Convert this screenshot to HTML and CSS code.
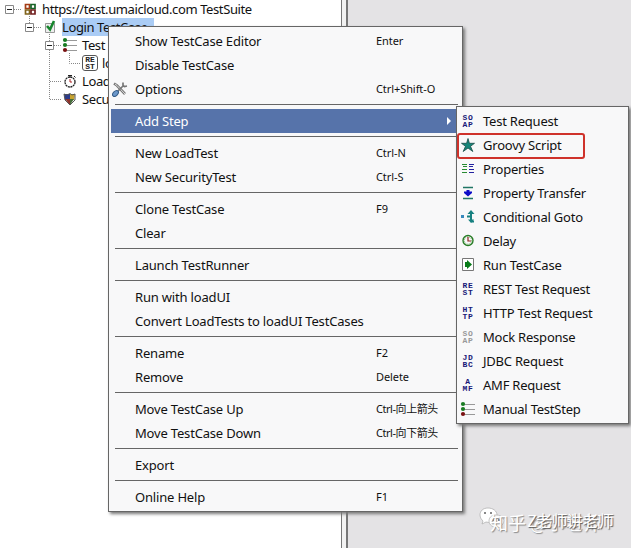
FILE: index.html
```html
<!DOCTYPE html>
<html lang="en">
<head>
<meta charset="utf-8">
<title>TestSuite</title>
<link rel="stylesheet" href="styles.css">
</head>
<body>
<svg class="defs" aria-hidden="true">
  <symbol id="list" viewBox="0 0 16 16"><path d="M5 3.500h10M5 8.500h10M5 13.500h10" stroke="#999" stroke-width="1"/><circle cx="3" cy="3" r="2.1" fill="#187b22"/><circle cx="3" cy="8" r="2.1" fill="#187b22"/><circle cx="3" cy="13" r="2.1" fill="#781010"/></symbol>
</svg>
<div class="app">
  <div class="tree">
    <svg class="lines" width="140" height="110" fill="none" stroke="#888"><path stroke-dasharray="1 1" d="M14 9.500h8M29.500 14v9M34 27.500h8M49.500 34v66M54 45.500h8M69.500 53v10.500h11M50 81.500h11M50 99.500h11"/><g fill="#fff"><path d="M5.500 5.500h8v8h-8zM25.500 23.500h8v8h-8zM45.500 41.500h8v8h-8z"/></g><path stroke="#222" d="M7 9.500h5M27 27.500h5M47 45.500h5"/></svg>
    <div class="node l1"><svg width="16" height="16"><g stroke-width="1.700" fill="#fff"><path stroke="#a33c16" d="M3.500 3.500h4v4h-4z"/><path stroke="#176327" d="M9 3.500h4v4H9z"/><path stroke="#80631a" d="M3.500 9h4v4h-4z"/><path stroke="#722020" d="M9 9h4v4H9z"/></g></svg><span>https://test.umaicloud.com TestSuite</span></div>
    <div class="node l2"><svg width="16" height="16"><path fill="#eee" stroke="#999" d="M3.500 4.500h9v9h-9z"/><path fill="none" stroke="#16852c" stroke-width="2.600" d="M5 7l3 3.500L12 2"/></svg><span class="sel">Login TestCase</span></div>
    <div class="node l3"><svg width="16" height="16"><use href="#list"/></svg><span>Test Steps</span></div>
    <div class="node l4"><span class="glyph boxed">RE<br>ST</span><span>login</span></div>
    <div class="node l3"><svg width="16" height="16" fill="none" stroke="#222"><circle cx="8" cy="9" r="5" fill="#fff" stroke-width="1.300" stroke-dasharray="2 .6"/><path d="M6 2.500h4M8 2v3M12 3l1.500 1.500"/><path stroke="#a22" d="M8 6v3h2"/></svg><span>Load Tests</span></div>
    <div class="node l3"><svg width="16" height="16"><path fill="#2b3b8b" d="M2 3h6v6H3z"/><path fill="#c7a22e" d="M8 3h5l-1 6H8z"/><path fill="#8c332b" d="M3 8h5v6z"/><path fill="#456c38" d="M8 8h4l-4 6z"/><path fill="none" stroke="#555" d="M2 3l3 1 3-1.500L10 4l3-1v6l-5 5-5-5z"/></svg><span>Security Tests</span></div>
  </div>
  <div class="divider"></div>
  <div class="desk"></div>
</div>

<div class="menu main">
  <div class="item"><b>Show TestCase Editor</b><kbd>Enter</kbd></div>
  <div class="item"><b>Disable TestCase</b></div>
  <div class="item"><svg class="tool" width="16" height="16" fill="none"><path stroke="#777" stroke-width="2.600" d="M2 2.500l3 2 8 8.500"/><path stroke="#ddd" d="M3 3l2 1.500 8 8.500"/><path stroke="#777" stroke-width="1.700" d="M5.500 10.500L12 4M11 1.500v3l1.500 1 2.500-.500"/><ellipse cx="3.500" cy="12.500" rx="3.500" ry="2.200" transform="rotate(-45 3.500 12.500)" fill="#6c98ca" stroke="#345c87"/></svg><b>Options</b><kbd>Ctrl+Shift-O</kbd></div>
  <hr>
  <div class="item active"><b>Add Step</b><i></i></div>
  <hr>
  <div class="item"><b>New LoadTest</b><kbd>Ctrl-N</kbd></div>
  <div class="item"><b>New SecurityTest</b><kbd>Ctrl-S</kbd></div>
  <hr>
  <div class="item"><b>Clone TestCase</b><kbd>F9</kbd></div>
  <div class="item"><b>Clear</b></div>
  <hr>
  <div class="item"><b>Launch TestRunner</b></div>
  <hr>
  <div class="item"><b>Run with loadUI</b></div>
  <div class="item"><b>Convert LoadTests to loadUI TestCases</b></div>
  <hr>
  <div class="item"><b>Rename</b><kbd>F2</kbd></div>
  <div class="item"><b>Remove</b><kbd>Delete</kbd></div>
  <hr>
  <div class="item"><b>Move TestCase Up</b><kbd class="cjk">Ctrl-向上箭头</kbd></div>
  <div class="item"><b>Move TestCase Down</b><kbd class="cjk">Ctrl-向下箭头</kbd></div>
  <hr>
  <div class="item"><b>Export</b></div>
  <hr>
  <div class="item"><b>Online Help</b><kbd>F1</kbd></div>
</div>

<div class="menu sub">
  <div class="item"><span class="glyph">SO<br>AP</span><b>Test Request</b></div>
  <div class="item marked"><svg width="16" height="16"><path fill="#168579" stroke="#164a45" stroke-width=".8" d="M8 1.500l1.400 4.800H14.500l-4 3 2.300 5.200L8 11l-4.800 3.500 2.300-5.200-4-3h5.100z"/></svg><b>Groovy Script</b></div>
  <div class="item"><svg width="16" height="16"><path stroke="#278b32" d="M2 3.500h5M3 5.500h4M2 8.500h5M2 11.500h5"/><path stroke="#2222a0" d="M9 3.500h5M9 5.500h4M9 8.500h5M9 11.500h5"/></svg><b>Properties</b></div>
  <div class="item"><svg width="16" height="16"><path stroke="#207666" stroke-width="1.300" d="M3 2.500h10M3 13.500h10"/><path fill="#0c0cc8" d="M6.500 5h3v1.500H12v1.500l-4 3.500L4 8V6.500h2.500z"/></svg><b>Property Transfer</b></div>
  <div class="item"><svg width="16" height="16"><path fill="#3889bd" d="M1 6h3v3H1z"/><path fill="none" stroke="#168080" stroke-width="2" d="M11 4v8M7 7.500h4M11 12.500h3"/><path fill="#168080" d="M7.500 5L11 1l3.500 4zM8 10.500h6L11 14z"/></svg><b>Conditional Goto</b></div>
  <div class="item"><svg width="16" height="16" fill="none"><circle cx="8" cy="7.500" r="5" stroke="#287c26" stroke-width="1.400"/><circle cx="8" cy="7.500" r="3.700" stroke="#69a95e" stroke-dasharray="1 1"/><path stroke="#8b2020" stroke-width="1.200" d="M8 4v4h3"/></svg><b>Delay</b></div>
  <div class="item"><svg width="16" height="16"><path fill="#fff" stroke="#777" d="M2.500 1.500h11v12h-11z"/><path fill="#087b18" d="M5 5h2V3l5 4.500L7 12v-2H5z"/></svg><b>Run TestCase</b></div>
  <div class="item"><span class="glyph">RE<br>ST</span><b>REST Test Request</b></div>
  <div class="item"><span class="glyph">HT<br>TP</span><b>HTTP Test Request</b></div>
  <div class="item"><span class="glyph gray">SO<br>AP</span><b>Mock Response</b></div>
  <div class="item"><span class="glyph">JD<br>BC</span><b>JDBC Request</b></div>
  <div class="item"><span class="glyph">A<br>MF</span><b>AMF Request</b></div>
  <div class="item"><svg width="16" height="16"><use href="#list"/></svg><b>Manual TestStep</b></div>
</div>

<div class="watermark">
  <svg width="28" height="24"><path fill="#fff" stroke="#aaa" stroke-width=".7" d="M9 1C4 1 1 4 1 8c0 3 2 5 3 6l-1 3 4-2c8 2 11-3 11-7 0-4-4-7-9-7z"/><path fill="#fff" stroke="#aaa" stroke-width=".7" d="M17 8c-5 0-7 3-7 6 0 4 4 7 9 6l4 2-1-3c6-5 2-11-5-11z"/><path stroke="#888" stroke-width="2" d="M5 6h2M11 6h2M13 13h2M19 13h2"/></svg>
  <span class="wm-a">知乎 @小老师</span>
  <span class="wm-b">Z老师讲老师</span>
</div>
</body>
</html>
```
FILE: styles.css
```css
*, ::after { box-sizing: border-box; }
body { margin: 0; width: 631px; height: 548px; overflow: hidden; position: relative; font-family: "Noto Sans", "Noto Sans CJK SC", sans-serif; font-size: 13px; color: #111; }
.defs { position: absolute; width: 0; height: 0; }
.app { display: flex; height: 548px; }
.tree { position: relative; width: 342px; background: #fff; border-right: 1px solid #777; overflow: hidden; letter-spacing: -.39px; }
.lines { position: absolute; left: 0; top: 0; }
.node { display: flex; align-items: center; height: 18px; gap: 4px; white-space: nowrap; line-height: 18px; }
.node svg { flex: none; }
.l1 { padding-left: 22px; }
.l2 { padding-left: 42px; }
.l3 { padding-left: 62px; }
.l4 { padding-left: 82px; }
.sel { background: #aaccf5; width: 92px; }
.divider { width: 6px; background: #f2f2f2; border-right: 2px solid #777; }
.desk { flex: 1; background: #e4e3e5; }
.menu { position: absolute; background: #f8f8f9; border: 1px solid #666; padding: 2px; box-shadow: 2px 2px 3px #777; }
.main { left: 108px; top: 26px; width: 355px; height: 486px; }
.sub { left: 456px; top: 106px; width: 173px; height: 318px; }
.item { display: flex; align-items: center; height: 24px; white-space: nowrap; position: relative; line-height: 24px; }
.main .item { padding-left: 24px; }
.main .tool { margin-left: -23px; margin-right: 7px; flex: none; }
.item b { font-weight: normal; letter-spacing: -.18px; }
.sub .item b { letter-spacing: -.22px; }
kbd { font-family: inherit; font-size: 11px; width: 84px; margin-left: auto; letter-spacing: -.08px; }
.cjk { letter-spacing: -.45px; }
.active { background: #5673aa; color: #fff; }
.active i { margin-left: auto; margin-right: 9px; border: solid transparent; border-width: 4px 0 4px 4px; border-left-color: #fff; }
hr { border: 0; height: 1px; background: #666; margin: 3px 2px 4px 4px; }
.sub .item { padding-left: 1px; gap: 7px; }
.sub svg { flex: none; }
.glyph { width: 16px; height: 16px; flex: none; padding-top: 1px; font: bold 8px/7px "Liberation Mono", monospace; text-align: center; letter-spacing: .8px; color: #181878; }
.gray { color: #999; }
.boxed { border: 1px solid #555; border-radius: 3px; color: #222; padding-top: 0; letter-spacing: 0; }
.marked::after { content: ""; position: absolute; left: -2px; top: 0; width: 128px; height: 26px; border: 2.5px solid #cf322b; border-radius: 3px; }
.watermark { position: absolute; left: 479px; top: 507px; width: 150px; height: 32px; color: #fff; text-shadow: 1px 1px 1px #888; }
.wm-a, .wm-b { position: absolute; white-space: nowrap; font: 18px/24px "Noto Sans CJK SC", sans-serif; }
.wm-a { left: 11px; top: 3px; }
.wm-b { left: 48px; top: 1px; font-size: 16px; letter-spacing: -.6px; text-shadow: 1px 1px 1px #555; }
```
